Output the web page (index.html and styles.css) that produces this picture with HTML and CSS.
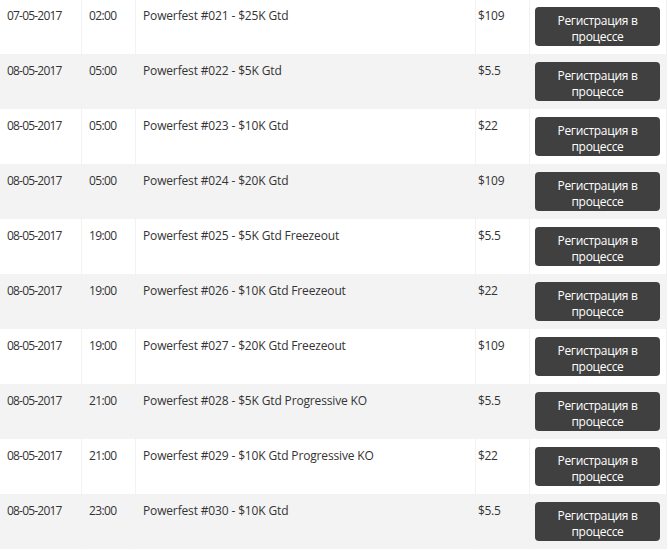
FILE: index.html
```html
<!DOCTYPE html>
<html>
<head>
<meta charset="utf-8">
<link rel="stylesheet" href="styles.css">
</head>
<body>
<table class="schedule">
  <tbody>
    <tr><td class="date">07-05-2017</td><td class="time">02:00</td><td class="name">Powerfest #021 - $25K Gtd</td><td class="price">$109</td><td class="action"><button class="btn">Регистрация в процессе</button></td></tr>
    <tr><td class="date">08-05-2017</td><td class="time">05:00</td><td class="name">Powerfest #022 - $5K Gtd</td><td class="price">$5.5</td><td class="action"><button class="btn">Регистрация в процессе</button></td></tr>
    <tr><td class="date">08-05-2017</td><td class="time">05:00</td><td class="name">Powerfest #023 - $10K Gtd</td><td class="price">$22</td><td class="action"><button class="btn">Регистрация в процессе</button></td></tr>
    <tr><td class="date">08-05-2017</td><td class="time">05:00</td><td class="name">Powerfest #024 - $20K Gtd</td><td class="price">$109</td><td class="action"><button class="btn">Регистрация в процессе</button></td></tr>
    <tr><td class="date">08-05-2017</td><td class="time">19:00</td><td class="name">Powerfest #025 - $5K Gtd Freezeout</td><td class="price">$5.5</td><td class="action"><button class="btn">Регистрация в процессе</button></td></tr>
    <tr><td class="date">08-05-2017</td><td class="time">19:00</td><td class="name">Powerfest #026 - $10K Gtd Freezeout</td><td class="price">$22</td><td class="action"><button class="btn">Регистрация в процессе</button></td></tr>
    <tr><td class="date">08-05-2017</td><td class="time">19:00</td><td class="name">Powerfest #027 - $20K Gtd Freezeout</td><td class="price">$109</td><td class="action"><button class="btn">Регистрация в процессе</button></td></tr>
    <tr><td class="date">08-05-2017</td><td class="time">21:00</td><td class="name">Powerfest #028 - $5K Gtd Progressive KO</td><td class="price">$5.5</td><td class="action"><button class="btn">Регистрация в процессе</button></td></tr>
    <tr><td class="date">08-05-2017</td><td class="time">21:00</td><td class="name">Powerfest #029 - $10K Gtd Progressive KO</td><td class="price">$22</td><td class="action"><button class="btn">Регистрация в процессе</button></td></tr>
    <tr><td class="date">08-05-2017</td><td class="time">23:00</td><td class="name">Powerfest #030 - $10K Gtd</td><td class="price">$5.5</td><td class="action"><button class="btn">Регистрация в процессе</button></td></tr>
  </tbody>
</table>
</body>
</html>
```
FILE: styles.css
```css
html, body {
  margin: 0;
  padding: 0;
  background: #ffffff;
}
body {
  font-family: "Open Sans", "Noto Sans", sans-serif;
  font-size: 12px;
  color: #333333;
  overflow: hidden;
}
.schedule {
  border-collapse: collapse;
  table-layout: fixed;
  width: 665px;
  margin-top: -1px;
  border-right: 1px solid #f2f2f2;
}
.schedule tr:nth-child(even) {
  background: #f3f3f3;
}
.schedule td {
  padding: 9px 6px 0 7px;
  vertical-align: top;
  line-height: 16px;
  border-left: 1px solid #f2f2f2;
}
.schedule td:first-child {
  border-left: none;
}
.date { width: 68px; letter-spacing: -0.8px; }
.time { width: 40px; letter-spacing: -0.6px; }
.name { width: 326px; letter-spacing: -0.15px; }
.price { width: 45px; letter-spacing: -0.3px; }
.schedule td.price { padding-left: 2px; }
.schedule td.action { width: 126px; padding: 8px 5px 8px 5px; }
.btn {
  display: block;
  width: 125px;
  height: 39px;
  border: none;
  border-radius: 4px;
  background: #404040;
  color: #ffffff;
  font-family: "Open Sans", "Noto Sans", sans-serif;
  font-size: 12px;
  letter-spacing: -0.3px;
  line-height: 16px;
  padding: 6px 10px 1px 10px;
  text-align: center;
  cursor: pointer;
}
```
